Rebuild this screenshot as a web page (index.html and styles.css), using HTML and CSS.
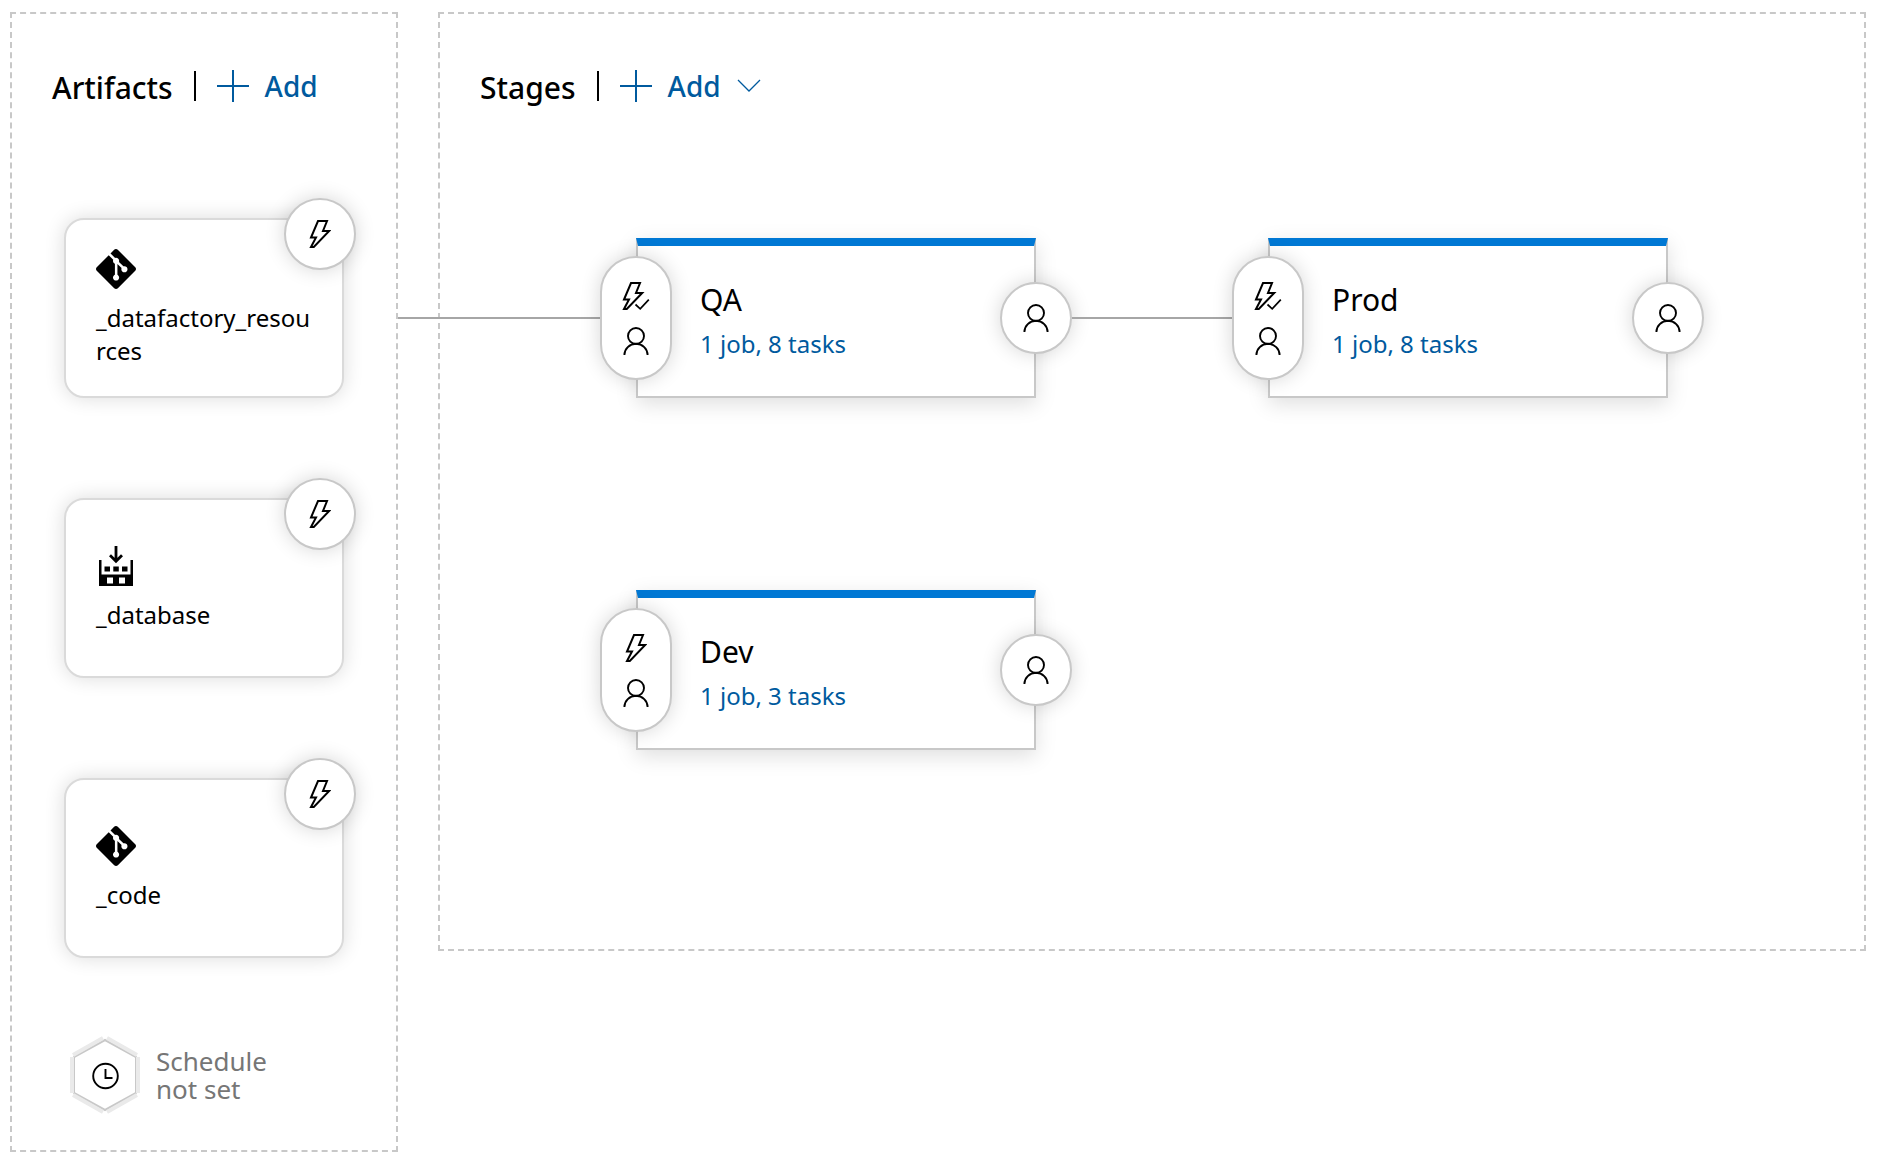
FILE: index.html
```html
<!DOCTYPE html>
<html lang="en">
<head>
<meta charset="utf-8">
<title>Release pipeline</title>
<link rel="stylesheet" href="styles.css">
</head>
<body>
<svg class="sprite" aria-hidden="true">
  <symbol id="plus" viewBox="0 0 32 32"><path d="M16 0v32M0 16h32" fill="none" stroke="currentColor" stroke-width="2"/></symbol>
  <symbol id="chevron" viewBox="0 0 24 14"><path d="M1 1l11 11L23 1" fill="none" stroke="currentColor" stroke-width="1.3"/></symbol>
  <symbol id="bolt" viewBox="0 0 22 28"><path d="M9 1h9l-4 10h6.200L4.800 27H2L7 17.500H2z" fill="none" stroke="currentColor" stroke-width="2"/></symbol>
  <symbol id="bolt-check" viewBox="0 0 28 28">
    <path d="M9 1h9l-4 10h6.200L4.800 27H2L7 17.500H2z" fill="none" stroke="currentColor" stroke-width="2"/>
    <path d="M12.500 21.500l5.500 5.300 9.500-10" fill="none" stroke="#fff" stroke-width="4"/>
    <path d="M13.500 22.500l4.700 4.300 8.600-9.200" fill="none" stroke="currentColor" stroke-width="1.700"/>
  </symbol>
  <symbol id="person" viewBox="0 0 26 28"><g fill="none" stroke="currentColor" stroke-width="1.900"><circle cx="13" cy="9" r="8"/><path d="M1.400 28a11.600 11.200 0 0 1 23.200 0"/></g></symbol>
  <symbol id="git" viewBox="0 0 24 24"><path fill="currentColor" d="M23.546 10.930L13.067.452c-.604-.603-1.582-.603-2.188 0L8.708 2.627l2.760 2.760c.645-.215 1.379-.070 1.889.441.516.515.658 1.258.438 1.900l2.658 2.660c.645-.223 1.387-.078 1.900.435.721.720.721 1.884 0 2.604-.719.719-1.881.719-2.600 0-.539-.541-.674-1.337-.404-1.996L12.860 8.955v6.525c.176.086.342.203.488.348.713.721.713 1.883 0 2.600-.719.721-1.889.721-2.609 0-.719-.719-.719-1.879 0-2.598.182-.180.387-.316.605-.406V8.835c-.217-.091-.424-.222-.600-.401-.545-.545-.676-1.342-.396-2.009L7.636 3.700.450 10.881c-.600.605-.600 1.584 0 2.189l10.480 10.477c.604.604 1.582.604 2.186 0l10.430-10.430c.605-.603.605-1.582 0-2.187"/></symbol>
  <symbol id="build" viewBox="0 0 40 40">
    <path fill="currentColor" fill-rule="evenodd" d="M3 14h2.500v14.500h29V14H37v26H3zM11 31.500v6h6v-6zM23 31.500v6h6v-6zM8.500 20.500v5h5.500v-5zM17.300 20.500v5h5.500v-5zM26 20.500v5h5.500v-5z"/>
    <path d="M20 0v15M14 9.300l6 6 6-6" fill="none" stroke="currentColor" stroke-width="2.800"/>
  </symbol>
  <symbol id="clock" viewBox="0 0 70 78">
    <path d="M35 4l31 17v36L35 74 4 57V21z" fill="#fff" stroke="#c8c8c8" stroke-width="2"/>
    <path d="M37 2l30 17M68 21v36M67 59L37 76M33 76L3 59M2 57V21M3 19L33 2" fill="none" stroke="#eaeaea" stroke-width="4"/>
    <circle cx="35.500" cy="40" r="12.300" fill="none" stroke="#000" stroke-width="1.900"/>
    <path d="M35.500 33v9h7" fill="none" stroke="#000" stroke-width="1.900"/>
  </symbol>
</svg>

<main class="pipeline">
  <section class="panel artifacts">
    <header class="panel-header">
      <h2>Artifacts</h2>
      <span class="divider"></span>
      <button class="add"><svg class="icon-plus"><use href="#plus"/></svg>Add</button>
    </header>
    <div class="artifact-list">
      <article class="artifact">
        <svg class="icon-source"><use href="#git"/></svg>
        <span class="artifact-name">_datafactory_resources</span>
        <button class="round trigger" aria-label="Continuous deployment trigger"><svg class="icon-bolt"><use href="#bolt"/></svg></button>
      </article>
      <article class="artifact">
        <svg class="icon-source"><use href="#build"/></svg>
        <span class="artifact-name">_database</span>
        <button class="round trigger" aria-label="Continuous deployment trigger"><svg class="icon-bolt"><use href="#bolt"/></svg></button>
      </article>
      <article class="artifact">
        <svg class="icon-source"><use href="#git"/></svg>
        <span class="artifact-name">_code</span>
        <button class="round trigger" aria-label="Continuous deployment trigger"><svg class="icon-bolt"><use href="#bolt"/></svg></button>
      </article>
    </div>
    <button class="schedule">
      <svg class="icon-clock"><use href="#clock"/></svg>
      <span>Schedule<br>not set</span>
    </button>
  </section>

  <section class="panel stages">
    <header class="panel-header">
      <h2>Stages</h2>
      <span class="divider"></span>
      <button class="add"><svg class="icon-plus"><use href="#plus"/></svg>Add<svg class="icon-chevron"><use href="#chevron"/></svg></button>
    </header>
    <div class="stage-grid">
      <article class="stage from-artifacts">
        <h3>QA</h3>
        <a href="#qa">1 job, 8 tasks</a>
        <button class="pill" aria-label="Pre-deployment conditions"><svg class="icon-bolt-check"><use href="#bolt-check"/></svg><svg class="icon-person"><use href="#person"/></svg></button>
        <button class="round post" aria-label="Post-deployment conditions"><svg class="icon-person"><use href="#person"/></svg></button>
      </article>
      <article class="stage from-stage">
        <h3>Prod</h3>
        <a href="#prod">1 job, 8 tasks</a>
        <button class="pill" aria-label="Pre-deployment conditions"><svg class="icon-bolt-check"><use href="#bolt-check"/></svg><svg class="icon-person"><use href="#person"/></svg></button>
        <button class="round post" aria-label="Post-deployment conditions"><svg class="icon-person"><use href="#person"/></svg></button>
      </article>
      <article class="stage">
        <h3>Dev</h3>
        <a href="#dev">1 job, 3 tasks</a>
        <button class="pill" aria-label="Pre-deployment conditions"><svg class="icon-bolt"><use href="#bolt"/></svg><svg class="icon-person"><use href="#person"/></svg></button>
        <button class="round post" aria-label="Post-deployment conditions"><svg class="icon-person"><use href="#person"/></svg></button>
      </article>
    </div>
  </section>
</main>
</body>
</html>
```
FILE: styles.css
```css
* {
  box-sizing: border-box;
}

body {
  margin: 0;
  background: #fff;
  color: #000;
  font-family: "Segoe UI", "Noto Sans", "Open Sans", sans-serif;
  font-size: 24px;
}

button {
  margin: 0;
  padding: 0;
  border: 0;
  background: none;
  font: inherit;
  color: inherit;
  cursor: pointer;
}

h2,
h3 {
  margin: 0;
}

svg {
  flex: none;
}

.sprite {
  position: absolute;
  width: 0;
  height: 0;
}

.pipeline {
  display: flex;
  align-items: flex-start;
  gap: 40px;
  padding: 12px 16px 12px 10px;
}

.panel {
  border: 2px dashed #c8c8c8;
}

.artifacts {
  flex: none;
  width: 388px;
  padding: 54px 40px 36px 40px;
}

.stages {
  flex: 1;
  padding: 54px 40px 199px 40px;
}

.panel-header {
  display: flex;
  align-items: center;
  height: 36px;
  gap: 21px;
}

.panel-header h2 {
  font-size: 30px;
  font-weight: 500;
  line-height: 40px;
  padding-top: 4px;
}

.divider {
  width: 2px;
  height: 30px;
  background: #000;
}

.add {
  display: flex;
  align-items: center;
  gap: 16px;
  color: #005a9e;
  font-size: 28px;
  font-weight: 500;
  line-height: 36px;
}

.icon-plus {
  width: 32px;
  height: 32px;
}

.icon-chevron {
  width: 24px;
  height: 14px;
}

.artifact-list {
  display: flex;
  flex-direction: column;
  gap: 100px;
  padding: 114px 0 0 12px;
}

.artifact {
  position: relative;
  display: flex;
  flex-direction: column;
  justify-content: center;
  gap: 12px;
  width: 280px;
  height: 180px;
  padding: 0 30px;
  border: 2px solid #dadada;
  border-radius: 20px;
  background: #fff;
  box-shadow: 0 0 20px rgba(0, 0, 0, 0.14);
}

.artifact-name {
  line-height: 33px;
  word-break: break-all;
}

.icon-source {
  width: 40px;
  height: 40px;
}

.round,
.pill {
  position: absolute;
  display: flex;
  flex-direction: column;
  align-items: center;
  justify-content: center;
  gap: 17px;
  width: 72px;
  height: 72px;
  border: 2px solid #c8c8c8;
  border-radius: 36px;
  background: #fff;
  box-shadow: 0 0 20px rgba(0, 0, 0, 0.16);
}

.trigger {
  top: -22px;
  right: -14px;
}

.icon-bolt {
  width: 22px;
  height: 28px;
}

.icon-bolt-check {
  width: 28px;
  height: 28px;
}

.icon-person {
  width: 26px;
  height: 28px;
}

.schedule {
  display: flex;
  align-items: center;
  gap: 16px;
  margin: 78px 0 0 18px;
  color: #767676;
  font-size: 26px;
  line-height: 28px;
  text-align: left;
}

.icon-clock {
  width: 70px;
  height: 78px;
}

.stage-grid {
  display: grid;
  grid-template-columns: 400px 400px;
  gap: 192px 232px;
  padding: 134px 0 0 156px;
}

.stage {
  position: relative;
  display: flex;
  flex-direction: column;
  align-items: flex-start;
  justify-content: center;
  height: 160px;
  padding: 2px 0 0 62px;
  border: 2px solid #c8c8c8;
  border-top: 8px solid #0078d4;
  background: #fff;
  box-shadow: 0 6px 20px rgba(0, 0, 0, 0.13);
}

.stage h3 {
  font-size: 30px;
  font-weight: 400;
  line-height: 44px;
}

.stage a {
  color: #005a9e;
  line-height: 44px;
  text-decoration: none;
}

.stage .pill {
  top: 10px;
  left: -38px;
  height: 124px;
}

.stage .post {
  top: 36px;
  right: -38px;
}

.from-artifacts::before,
.from-stage::before {
  content: "";
  position: absolute;
  top: 71px;
  right: 100%;
  height: 2px;
  background: #a6a6a6;
}

.from-artifacts::before {
  width: 240px;
}

.from-stage::before {
  width: 198px;
}
```
